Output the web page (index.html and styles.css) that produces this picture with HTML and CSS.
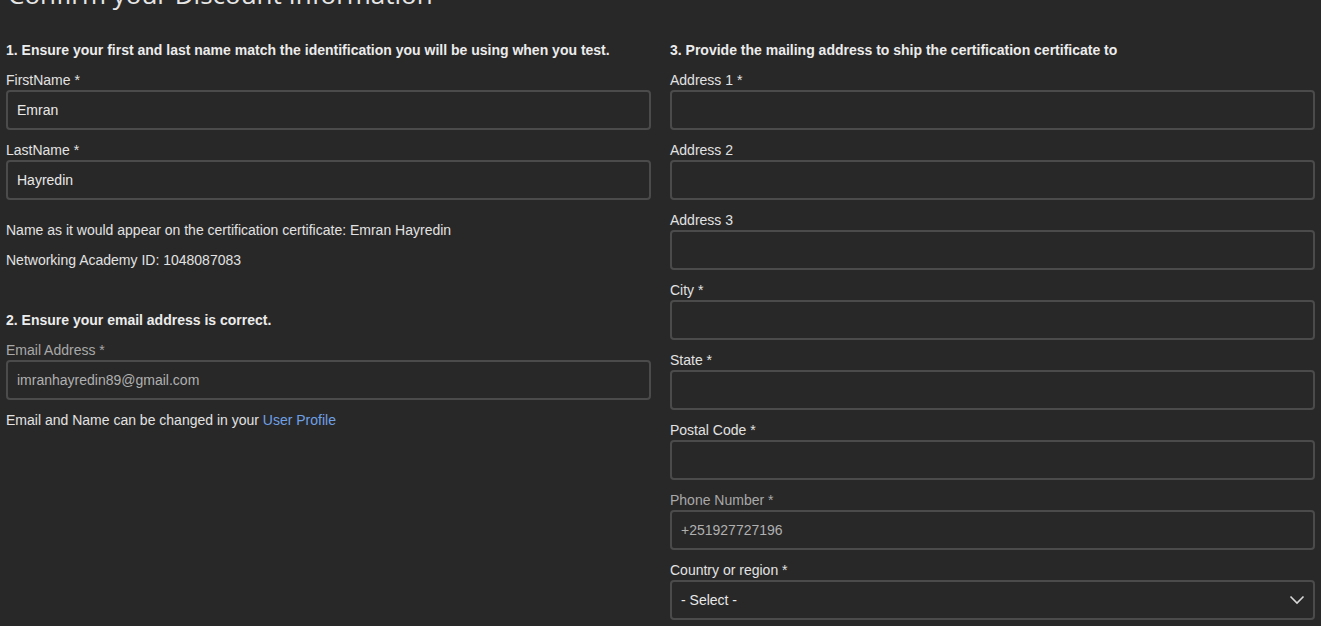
FILE: index.html
```html
<!DOCTYPE html>
<html>
<head>
<meta charset="utf-8">
<link rel="stylesheet" href="styles.css">
</head>
<body>
<div class="page">
  <h1 class="title">Confirm your Discount Information</h1>
  <div class="cols">
    <div class="col">
      <div class="section">
        <h2 class="sec-title">1. Ensure your first and last name match the identification you will be using when you test.</h2>
        <div class="field">
          <label class="label">FirstName *</label>
          <div class="input">Emran</div>
        </div>
        <div class="field">
          <label class="label">LastName *</label>
          <div class="input">Hayredin</div>
        </div>
        <p class="text first">Name as it would appear on the certification certificate: Emran Hayredin</p>
        <p class="text">Networking Academy ID: 1048087083</p>
      </div>
      <div class="section s2">
        <h2 class="sec-title">2. Ensure your email address is correct.</h2>
        <div class="field">
          <label class="label muted">Email Address *</label>
          <div class="input disabled">imranhayredin89@gmail.com</div>
        </div>
        <p class="text">Email and Name can be changed in your <a class="link" href="#">User Profile</a></p>
      </div>
    </div>
    <div class="col">
      <div class="section">
        <h2 class="sec-title">3. Provide the mailing address to ship the certification certificate to</h2>
        <div class="field"><label class="label">Address 1 *</label><div class="input"></div></div>
        <div class="field"><label class="label">Address 2</label><div class="input"></div></div>
        <div class="field"><label class="label">Address 3</label><div class="input"></div></div>
        <div class="field"><label class="label">City *</label><div class="input"></div></div>
        <div class="field"><label class="label">State *</label><div class="input"></div></div>
        <div class="field"><label class="label">Postal Code *</label><div class="input"></div></div>
        <div class="field"><label class="label muted">Phone Number *</label><div class="input disabled">+251927727196</div></div>
        <div class="field">
          <label class="label">Country or region *</label>
          <div class="input select">
            <span>- Select -</span>
            <svg class="chev" width="16" height="10" viewBox="0 0 16 10"><path d="M1.5 1.5 L8 8 L14.5 1.5" fill="none" stroke="#d8d8d8" stroke-width="1.6"/></svg>
          </div>
        </div>
      </div>
    </div>
  </div>
</div>
</body>
</html>
```
FILE: styles.css
```css
html, body {
  margin: 0;
  padding: 0;
  background: #282828;
  overflow: hidden;
}
.page {
  padding: 0 6px;
  font-family: "Liberation Sans", Arial, sans-serif;
  font-size: 14px;
  line-height: 20px;
  color: #e6e6e6;
}
.title {
  margin: -26px 0 26px 2px;
  height: 40px;
  font-family: "Open Sans", "Noto Sans", sans-serif;
  font-weight: 400;
  font-size: 26px;
  line-height: 40px;
  color: #e6e6e6;
}
.cols {
  display: grid;
  grid-template-columns: 1fr 1fr;
  column-gap: 19px;
}
.sec-title {
  margin: 0 0 10px;
  font-size: 14px;
  line-height: 20px;
  font-weight: 700;
  color: #ececec;
}
.field {
  margin-bottom: 10px;
}
.label {
  display: block;
  height: 20px;
  color: #e2e2e2;
}
.label.muted { color: #a8a8a8; }
.input {
  box-sizing: border-box;
  height: 40px;
  border: 2px solid #4b4b4b;
  border-radius: 4px;
  padding: 0 9px;
  display: flex;
  align-items: center;
  color: #e8e8e8;
  background: #282828;
}
.input.disabled { color: #b0b0b0; }
.select {
  justify-content: space-between;
  padding-right: 8px;
}
.chev { display: block; }
.text {
  margin: 0 0 10px;
  color: #e2e2e2;
}
.text.first { margin-top: 20px; }
.s2 { margin-top: 40px; }
.link { color: #6fa0e6; text-decoration: none; }
```
